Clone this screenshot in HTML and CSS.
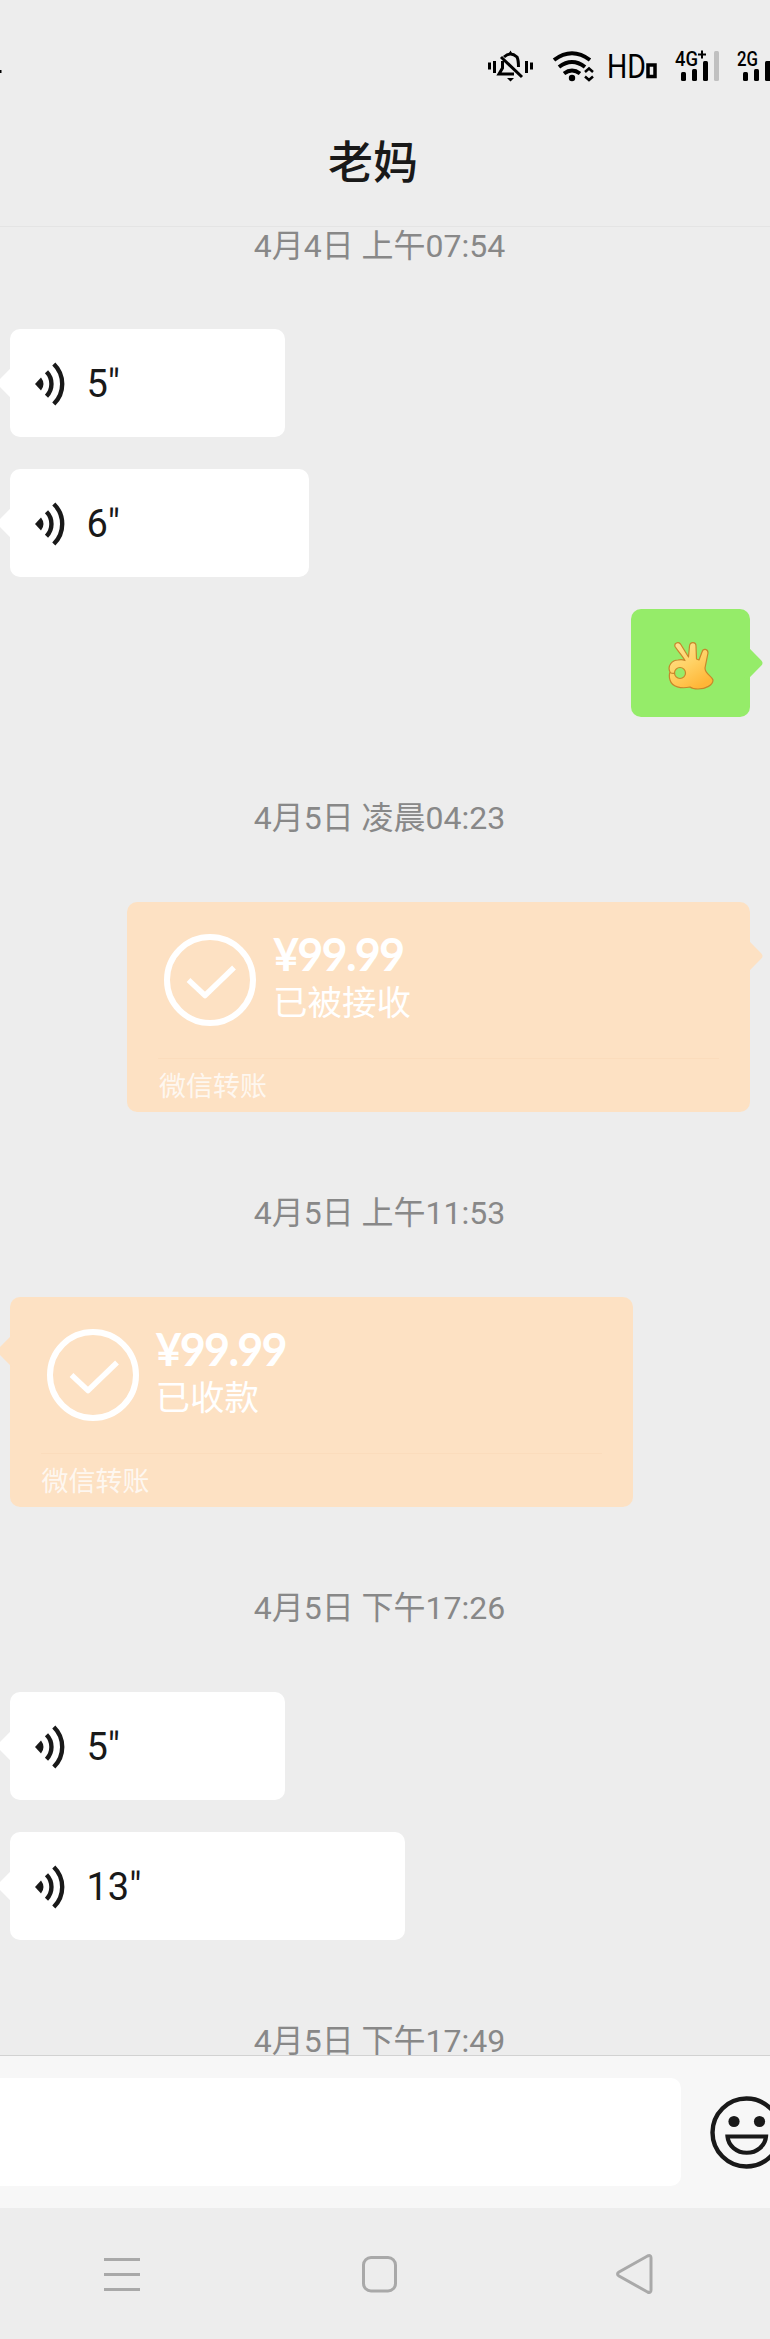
FILE: index.html
```
<!DOCTYPE html>
<html lang="zh-CN">
<head>
    <meta charset="UTF-8">
    <meta name="viewport" content="width=device-width, initial-scale=1.0">
    <title>老妈</title>
    <link rel="stylesheet" href="styles.css">
</head>
<body>
    <!-- Shared icons -->
    <svg class="icon-defs" width="0" height="0">
        <symbol id="icon-voice" viewBox="0 0 32 44">
            <path d="M1 22 L7 15.5 Q12 22 7 28.5 Z" fill="#191919"/>
            <path d="M12.5 9.8 A17.5 17.5 0 0 1 12.5 34.2 M19.8 2 A28 28 0 0 1 19.8 42" fill="none" stroke="#191919" stroke-width="4.4"/>
        </symbol>
        <symbol id="icon-check" viewBox="0 0 92 92">
            <circle cx="46" cy="46" r="43" fill="none" stroke="#fff" stroke-width="6"/>
            <path d="M24.5 46 L41 61.5 L70 33.5" fill="none" stroke="#fff" stroke-width="5.5" stroke-linejoin="round"/>
        </symbol>
    </svg>

    <div class="screen">
        <!-- Status bar -->
        <div class="status-bar">
            <svg class="status-icons" width="770" height="88" viewBox="0 0 770 88">
                <rect x="0" y="70" width="1.5" height="3"/>
                <!-- muted bell -->
                <g fill="none" stroke="#000" stroke-width="3">
                    <path d="M489.5 62.5v7 M494.5 61v12 M526.5 61v12 M531.5 62.5v7"/>
                    <path d="M504 57 Q510.5 51 517 57 Q518.5 60 518.5 67 M502.5 61 V68 L499 74 H514"/>
                    <path d="M501 57 L522 77"/>
                </g>
                <path d="M508.5 54 L510.5 50.5 L512.5 54 Z M507 78 H514 L510.5 81.5 Z"/>
                <!-- wifi -->
                <g fill="none" stroke="#000" stroke-width="4">
                    <path d="M554 60 Q572 46.5 590 60 M559 67 Q572 57 585 67 M564 73.5 Q572 67.5 580 73.5"/>
                    <path d="M585 72 L589 68.5 L593 72 M585 76.5 L589 80 L593 76.5" stroke-width="2.5"/>
                </g>
                <circle cx="572" cy="78" r="3.2"/>
                <!-- signal labels -->
                <text x="607" y="78" class="hd-label" textLength="39" lengthAdjust="spacingAndGlyphs">HD</text>
                <rect x="648" y="65" width="7" height="11.5" fill="none" stroke="#000" stroke-width="3.5"/>
                <text x="675" y="66" class="net-label" textLength="23" lengthAdjust="spacingAndGlyphs">4G</text>
                <path d="M698 54.5h8 M702 50.5v8" stroke="#000" stroke-width="2"/>
                <text x="737" y="65.5" class="net-label" textLength="21" lengthAdjust="spacingAndGlyphs">2G</text>
                <rect x="681" y="72" width="5" height="9" rx="1.5"/>
                <rect x="692" y="69" width="5" height="12" rx="1.5"/>
                <rect x="703" y="61" width="5" height="20" rx="1.5"/>
                <rect x="714" y="51" width="5" height="30" rx="1.5" fill="#c0c0c0"/>
                <rect x="743" y="72" width="5" height="9" rx="1.5"/>
                <rect x="754" y="69" width="5" height="12" rx="1.5"/>
                <rect x="765" y="61" width="6" height="20" rx="1.5"/>
            </svg>
        </div>

        <header class="chat-header">
            <h1>老妈</h1>
        </header>

        <!-- Messages -->
        <main class="chat">
            <div class="time time-first">4月4日 上午07:54</div>

            <div class="bubble voice voice-5">
                <svg class="voice-icon"><use href="#icon-voice"/></svg>
                <span>5"</span>
            </div>
            <div class="bubble voice voice-6">
                <svg class="voice-icon"><use href="#icon-voice"/></svg>
                <span>6"</span>
            </div>
            <div class="bubble sent emoji-msg">
                <svg width="46" height="48" viewBox="0 0 46 48">
                    <defs>
                        <linearGradient id="skin" x1="0" y1="0" x2="0.6" y2="1">
                            <stop offset="0" stop-color="#ffe59a"/>
                            <stop offset="0.55" stop-color="#ffd164"/>
                            <stop offset="1" stop-color="#ffb637"/>
                        </linearGradient>
                    </defs>
                    <path fill="url(#skin)" stroke="#c8862a" stroke-width="1.2" stroke-linejoin="round" d="M17 18.500 C14 13 9 8 7 4.500 C6 1 10 -0.500 12.500 2 L20.500 15 L21.500 4 C22 -0.500 28 -0.500 28 4 L28.500 17 L31 18 L34 10 C35 6 40 6.500 40 11 L37 26 C37 32 44 34 45 38 C45 43 38 47 30 47 C26 47 24 46.500 22 45 C13 47 4 45 2 38 C1 35 1 33 2 30 C-1 24 4 18 10 18 Q14 17 17 18.500 Z"/>
                    <circle cx="12" cy="31" r="5.5" fill="#95ec69" stroke="#c8862a" stroke-width="1.2"/>
                    <path d="M2 30.5 Q5 32 7 31" fill="none" stroke="#c8862a" stroke-width="1.2"/>
                </svg>
            </div>

            <div class="time">4月5日 凌晨04:23</div>

            <div class="bubble sent transfer">
                <div class="transfer-body">
                    <svg class="check-icon"><use href="#icon-check"/></svg>
                    <div class="transfer-info">
                        <div class="amount">¥99.99</div>
                        <div class="state">已被接收</div>
                    </div>
                </div>
                <div class="transfer-footer">微信转账</div>
            </div>

            <div class="time">4月5日 上午11:53</div>

            <div class="bubble transfer">
                <div class="transfer-body">
                    <svg class="check-icon"><use href="#icon-check"/></svg>
                    <div class="transfer-info">
                        <div class="amount">¥99.99</div>
                        <div class="state">已收款</div>
                    </div>
                </div>
                <div class="transfer-footer">微信转账</div>
            </div>

            <div class="time">4月5日 下午17:26</div>

            <div class="bubble voice voice-5">
                <svg class="voice-icon"><use href="#icon-voice"/></svg>
                <span>5"</span>
            </div>
            <div class="bubble voice voice-13">
                <svg class="voice-icon"><use href="#icon-voice"/></svg>
                <span>13"</span>
            </div>

            <div class="time time-last">4月5日 下午17:49</div>
        </main>

        <!-- Input bar -->
        <div class="input-bar">
            <div class="input-box"></div>
            <svg class="smile-icon" width="74" height="74" viewBox="0 0 74 74">
                <circle cx="36.5" cy="36.5" r="34" fill="none" stroke="#191919" stroke-width="4.4"/>
                <circle cx="24" cy="25.5" r="5.6" fill="#191919"/>
                <circle cx="49.5" cy="25.5" r="5.6" fill="#191919"/>
                <path d="M17.5 40.5 H56 A19.3 17.5 0 0 1 17.5 40.5 Z" fill="none" stroke="#191919" stroke-width="4.2"/>
            </svg>
        </div>

        <!-- System navigation -->
        <nav class="nav-bar">
            <svg width="40" height="40" viewBox="0 0 40 40"><path d="M2 5.5h36 M2 20.5h36 M2 35.5h36"/></svg>
            <svg width="40" height="40" viewBox="0 0 40 40"><rect x="4.5" y="3.5" width="32" height="33.5" rx="7.5"/></svg>
            <svg width="40" height="40" viewBox="0 0 40 40"><path d="M32.5 2 Q36 0.5 36 4 V36 Q36 39.5 32.5 38 L4 22 Q1 20 4 18 Z"/></svg>
        </nav>
    </div>
</body>
</html>
```
FILE: styles.css
```
/* General Layout */
body {
    margin: 0;
    background-color: #ededed;
    font-family: Roboto, "Noto Sans CJK SC", sans-serif;
    color: #191919;
}

.icon-defs {
    position: absolute;
}

.screen {
    width: 770px;
    height: 2339px;
    overflow: hidden;
    display: flex;
    flex-direction: column;
}

/* Status bar */
.status-bar {
    height: 88px;
}

.status-icons {
    display: block;
}

.hd-label {
    font-size: 33px;
    font-weight: 400;
}

.net-label {
    font-size: 21px;
    font-weight: 500;
}

/* Header */
.chat-header {
    box-sizing: border-box;
    height: 139px;
    padding-right: 24px;
    border-bottom: 1px solid #e4e4e4;
    text-align: center;
}

.chat-header h1 {
    margin: 0;
    padding-top: 46px;
    font-size: 45px;
    line-height: 60px;
    font-weight: 500;
}

/* Chat */
.chat {
    height: 1828px;
    display: flex;
    flex-direction: column;
    align-items: flex-start;
    flex-shrink: 0;
}

.time {
    box-sizing: border-box;
    flex-shrink: 0;
    width: 759px;
    height: 185px;
    padding-top: 81px;
    font-size: 32px;
    line-height: 40px;
    text-align: center;
    color: #888;
}

.time-first {
    height: 102px;
    padding-top: 0;
    line-height: 38px;
}

.time-last {
    height: 115px;
}

/* Bubbles */
.bubble {
    position: relative;
    flex-shrink: 0;
    box-sizing: border-box;
    height: 108px;
    margin-left: 9.5px;
    border-radius: 10px;
    background-color: #fff;
}

.bubble + .bubble {
    margin-top: 32px;
}

.bubble::before {
    content: "";
    position: absolute;
    top: 42px;
    left: -9px;
    width: 24px;
    height: 24px;
    border-radius: 4px;
    background-color: inherit;
    transform: rotate(45deg);
}

.sent {
    align-self: flex-end;
    margin-right: 20px;
}

.sent::before {
    left: auto;
    right: -9px;
}

/* Voice messages */
.voice {
    display: flex;
    align-items: center;
    padding-top: 2px;
    padding-left: 24px;
    font-size: 38px;
}

.voice-icon {
    width: 32px;
    height: 44px;
    margin-right: 21px;
}

.voice-5 {
    width: 275.5px;
}

.voice-6 {
    width: 299.5px;
}

.voice-13 {
    width: 395.5px;
}

.emoji-msg {
    display: flex;
    align-items: center;
    justify-content: center;
    width: 119px;
    padding-top: 5px;
    background-color: #95ec69;
}

/* Transfers */
.transfer {
    width: 623px;
    height: 210px;
    padding: 32px 31px 0;
    background-color: #fde1c3;
    color: #fff;
}

.transfer-body {
    display: flex;
    height: 124px;
    padding-left: 6px;
    border-bottom: 1px solid #fbdcbc;
}

.check-icon {
    width: 92px;
    height: 92px;
    margin-right: 17px;
}

.amount {
    font-family: Lato, sans-serif;
    font-size: 45px;
    font-weight: 700;
    line-height: 40px;
    letter-spacing: -1.8px;
}

.state {
    margin-top: 7px;
    font-size: 34.5px;
    line-height: 44px;
}

.transfer-footer {
    padding-left: 1px;
    font-size: 27px;
    line-height: 56px;
    opacity: 0.75;
}

/* Input bar */
.input-bar {
    box-sizing: border-box;
    flex-shrink: 0;
    display: flex;
    align-items: center;
    height: 153px;
    border-top: 1px solid #d2d2d2;
    background-color: #f7f7f7;
}

.input-box {
    flex-shrink: 0;
    width: 681px;
    height: 108px;
    border-radius: 0 10px 10px 0;
    background-color: #fff;
}

.smile-icon {
    flex-shrink: 0;
    margin-top: 2px;
    margin-left: 29px;
}

/* Navigation */
.nav-bar {
    display: flex;
    justify-content: space-between;
    height: 40px;
    padding: 46px 115px 0 102px;
}

.nav-bar svg {
    fill: none;
    stroke: #a9a9a9;
    stroke-width: 3;
}
```
